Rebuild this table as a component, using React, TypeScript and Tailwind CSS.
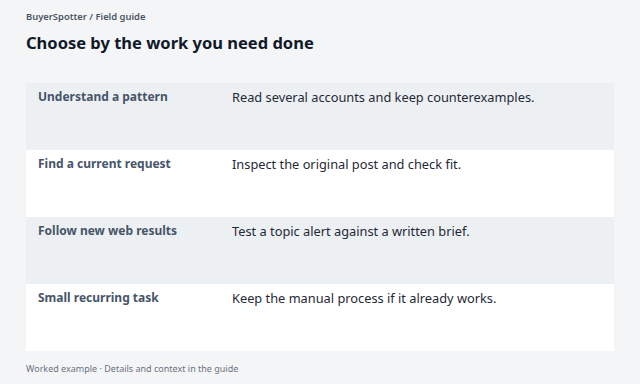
const ROWS = [
  { label: "Understand a pattern", desc: "Read several accounts and keep counterexamples." },
  { label: "Find a current request", desc: "Inspect the original post and check fit." },
  { label: "Follow new web results", desc: "Test a topic alert against a written brief." },
  { label: "Small recurring task", desc: "Keep the manual process if it already works." },
];

export default function App() {
  return (
    <main className="w-[640px] h-[384px] overflow-hidden bg-[#f3f5f7] px-[26px] pt-[10px] font-['Noto_Sans',sans-serif]">
      <div className="text-[9.4px] leading-[14px] font-semibold text-[#4b5563]">BuyerSpotter / Field guide</div>
      <h1 className="mt-[7px] text-[16.5px] leading-[24px] font-bold text-[#111827]">Choose by the work you need done</h1>
      <div className="mt-[28px] flex flex-col">
        {ROWS.map((row, i) => (
          <div key={row.label} className={`flex h-[67px] ${i % 2 === 0 ? "bg-[#edf0f3]" : "bg-white"}`}>
            <div className="w-[206px] shrink-0 pl-3 pt-[6px] text-[12px] leading-4 font-bold text-[#475569]">{row.label}</div>
            <div className="pt-[5px] text-[12.8px] leading-[18px] text-[#1f2937]">{row.desc}</div>
          </div>
        ))}
      </div>
      <div className="mt-[11px] text-[9px] leading-[14px] text-[#6b7280]">Worked example · Details and context in the guide</div>
    </main>
  );
}
